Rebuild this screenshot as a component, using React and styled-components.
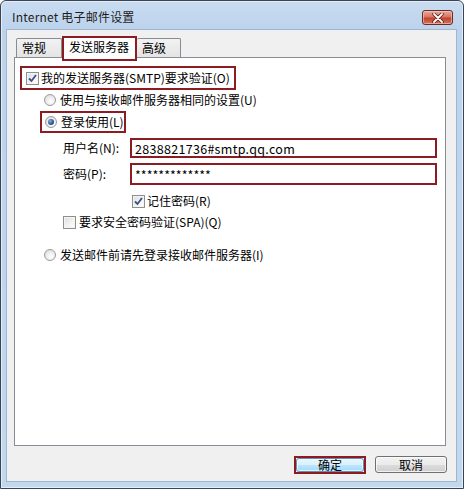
import React from "react";
import styled, { createGlobalStyle } from "styled-components";

const GlobalStyle = createGlobalStyle`
    html, body {
        margin: 0;
        padding: 0;
        background: #ffffff;
    }
    body {
        font-family: "Noto Sans CJK SC", "Noto Sans", sans-serif;
        font-size: 12px;
        color: #000;
    }
`;

const Window = styled.div`
    box-sizing: border-box;
    width: 464px;
    height: 489px;
    border: 1px solid #3b4452;
    border-radius: 6px 6px 0 0;
    padding: 0 7px 7px 6px;
    display: flex;
    flex-direction: column;
    background: linear-gradient(to bottom, #c9dcf1 0, #bcd3ec 29px, #bfd6ee 60%, #c2d8ef 100%);
    box-shadow: inset 0 0 0 1px #e4eefa;
`;

const TitleBar = styled.div`
    height: 29px;
    flex-shrink: 0;
    display: flex;
    align-items: flex-start;
    justify-content: space-between;
    padding: 0 3px 0 5px;
`;

const Title = styled.div`
    margin-top: 8px;
    font-size: 12px;
    line-height: 16px;
    color: #1e1e1e;
    letter-spacing: 0.2px;
`;

const CloseButton = styled.div`
    box-sizing: border-box;
    width: 31px;
    height: 15px;
    margin-top: 9px;
    border: 1px solid #6e2a22;
    border-radius: 3px;
    display: flex;
    align-items: center;
    justify-content: center;
    background: linear-gradient(to bottom, #e9a99e 0, #d47766 45%, #c0432d 55%, #d4765e 100%);
    box-shadow: inset 0 0 0 1px rgba(255, 220, 210, 0.5);
`;

const Client = styled.div`
    flex: 1;
    display: flex;
    flex-direction: column;
    background: #f0f0f0;
    box-shadow: 0 0 0 1px #9fb6cf;
`;

const TabBar = styled.div`
    height: 27px;
    display: flex;
    align-items: flex-end;
    padding-left: 9px;
`;

const Tab = styled.div`
    box-sizing: border-box;
    width: ${(p) => p.w}px;
    height: ${(p) => (p.active ? 25 : 19)}px;
    margin-bottom: ${(p) => (p.active ? -4 : 0)}px;
    position: relative;
    z-index: ${(p) => (p.active ? 1 : 0)};
    border: ${(p) => (p.active ? "2px solid #8b1d22" : "1px solid #898c95")};
    border-bottom: ${(p) => (p.active ? "2px solid #8b1d22" : "none")};
    border-left: ${(p) => (p.active || p.first ? "" : "none")};
    border-radius: ${(p) => (p.active ? "0" : "2px 2px 0 0")};
    background: ${(p) => (p.active ? "#ffffff" : "linear-gradient(to bottom, #f2f2f2, #e4e4e4)")};
    padding-left: ${(p) => p.pad}px;
    padding-top: 1px;
    line-height: 16px;
    font-size: 12px;
`;

const Panel = styled.div`
    box-sizing: border-box;
    width: 432px;
    height: 389px;
    margin-left: 7px;
    border: 1px solid #898c95;
    background: #ffffff;
    display: flex;
    flex-direction: column;
`;

const Row = styled.div`
    display: flex;
    align-items: center;
    height: ${(p) => p.h}px;
    margin-top: ${(p) => p.top || 0}px;
    margin-left: ${(p) => p.left || 0}px;
`;

const Highlight = styled.div`
    box-sizing: border-box;
    display: flex;
    align-items: center;
    height: ${(p) => p.h}px;
    width: ${(p) => p.w}px;
    border: 2px solid #8b1d22;
    padding-left: ${(p) => p.pad}px;
`;

const Label = styled.span`
    line-height: 16px;
    white-space: nowrap;
    margin-left: ${(p) => p.gap || 0}px;
    width: ${(p) => (p.w ? p.w + "px" : "auto")};
    flex-shrink: 0;
`;

const Field = styled.div`
    box-sizing: border-box;
    width: 307px;
    height: ${(p) => p.h}px;
    border: 2px solid #8b1d22;
    padding-left: 3px;
    display: flex;
    align-items: center;
    background: #fff;
    font-size: 12.5px;
    letter-spacing: ${(p) => (p.secret ? "0" : "0.3px")};
`;

const Box = styled.span`
    box-sizing: border-box;
    width: 13px;
    height: 13px;
    flex-shrink: 0;
    border: 1px solid #8e8f8f;
    background: linear-gradient(135deg, #dcdcdc 0, #f4f4f4 60%, #ffffff 100%);
    box-shadow: inset 0 0 0 1px #f4f4f4;
    display: flex;
    align-items: center;
    justify-content: center;
`;

const Radio = styled.span`
    box-sizing: border-box;
    width: 12px;
    height: 12px;
    flex-shrink: 0;
    border-radius: 50%;
    border: 1px solid #9a9a9a;
    background: radial-gradient(circle at 60% 65%, #ffffff 0, #f0f0f0 40%, #d5d5d5 100%);
    display: flex;
    align-items: center;
    justify-content: center;
    &::after {
        content: "";
        display: ${(p) => (p.checked ? "block" : "none")};
        width: 6px;
        height: 6px;
        border-radius: 50%;
        background: radial-gradient(circle at 35% 35%, #8fb1d9 0, #2a5a92 55%, #173b6b 100%);
    }
`;

const ButtonRow = styled.div`
    display: flex;
    justify-content: flex-end;
    align-items: flex-start;
    gap: 9px;
    margin-top: 10px;
    padding-right: 9px;
`;

const ButtonFrame = styled.div`
    box-sizing: border-box;
    width: 72px;
    height: 18px;
    border: 2px solid #8b1d22;
    display: flex;
`;

const Button = styled.div`
    box-sizing: border-box;
    width: ${(p) => (p.framed ? "100%" : "72px")};
    height: ${(p) => (p.framed ? "100%" : "17px")};
    border: 1px solid ${(p) => (p.primary ? "#5d8fc0" : "#707070")};
    border-radius: 3px;
    display: flex;
    align-items: center;
    justify-content: center;
    font-size: 12px;
    line-height: 14px;
    background: ${(p) =>
        p.primary
            ? "linear-gradient(to bottom, #eaf6fd 0, #d9f0fc 50%, #bee6fd 50%, #a7d9f5 100%)"
            : "linear-gradient(to bottom, #f2f2f2 0, #ebebeb 50%, #dddddd 50%, #cfcfcf 100%)"};
    box-shadow: inset 0 0 0 1px rgba(255, 255, 255, 0.7);
`;

function CheckBox({ checked }) {
    return (
        <Box>
            {checked && (
                <svg width="9" height="9" viewBox="0 0 9 9">
                    <path d="M1 4.5 L3.5 7 L8 1" fill="none" stroke="#3b4f8c" strokeWidth="1.8" />
                </svg>
            )}
        </Box>
    );
}

export default function App() {
    return (
        <>
            <GlobalStyle />
            <Window>
                <TitleBar>
                    <Title>Internet 电子邮件设置</Title>
                    <CloseButton>
                        <svg width="12" height="10" viewBox="0 0 12 10">
                            <path d="M2 1 L10 9 M10 1 L2 9" stroke="#5a1a14" strokeWidth="3.4" strokeLinecap="round" />
                            <path d="M2 1 L10 9 M10 1 L2 9" stroke="#ffffff" strokeWidth="1.8" strokeLinecap="round" />
                        </svg>
                    </CloseButton>
                </TitleBar>
                <Client>
                    <TabBar>
                        <Tab w={46} pad={5} first>常规</Tab>
                        <Tab w={75} pad={5} active>发送服务器</Tab>
                        <Tab w={44} pad={5}>高级</Tab>
                    </TabBar>
                    <Panel>
                        <Row h={24} top={8} left={5}>
                            <Highlight h={24} w={216} pad={4}>
                                <CheckBox checked />
                                <Label gap={2}>我的发送服务器(SMTP)要求验证(O)</Label>
                            </Highlight>
                        </Row>
                        <Row h={20} left={29}>
                            <Radio />
                            <Label gap={4}>使用与接收邮件服务器相同的设置(U)</Label>
                        </Row>
                        <Row h={22} top={1} left={25}>
                            <Highlight h={22} w={86} pad={3}>
                                <Radio checked />
                                <Label gap={4}>登录使用(L)</Label>
                            </Highlight>
                        </Row>
                        <Row h={20} top={5} left={48}>
                            <Label w={67}>用户名(N):</Label>
                            <Field h={20}>2838821736#smtp.qq.com</Field>
                        </Row>
                        <Row h={22} top={5} left={48}>
                            <Label w={67}>密码(P):</Label>
                            <Field h={22} secret>*************</Field>
                        </Row>
                        <Row h={18} top={7} left={117}>
                            <CheckBox checked />
                            <Label gap={2}>记住密码(R)</Label>
                        </Row>
                        <Row h={18} top={3} left={48}>
                            <CheckBox />
                            <Label gap={3}>要求安全密码验证(SPA)(Q)</Label>
                        </Row>
                        <Row h={20} top={14} left={29}>
                            <Radio />
                            <Label gap={4}>发送邮件前请先登录接收邮件服务器(I)</Label>
                        </Row>
                    </Panel>
                    <ButtonRow>
                        <ButtonFrame>
                            <Button primary framed>确定</Button>
                        </ButtonFrame>
                        <Button>取消</Button>
                    </ButtonRow>
                </Client>
            </Window>
        </>
    );
}
